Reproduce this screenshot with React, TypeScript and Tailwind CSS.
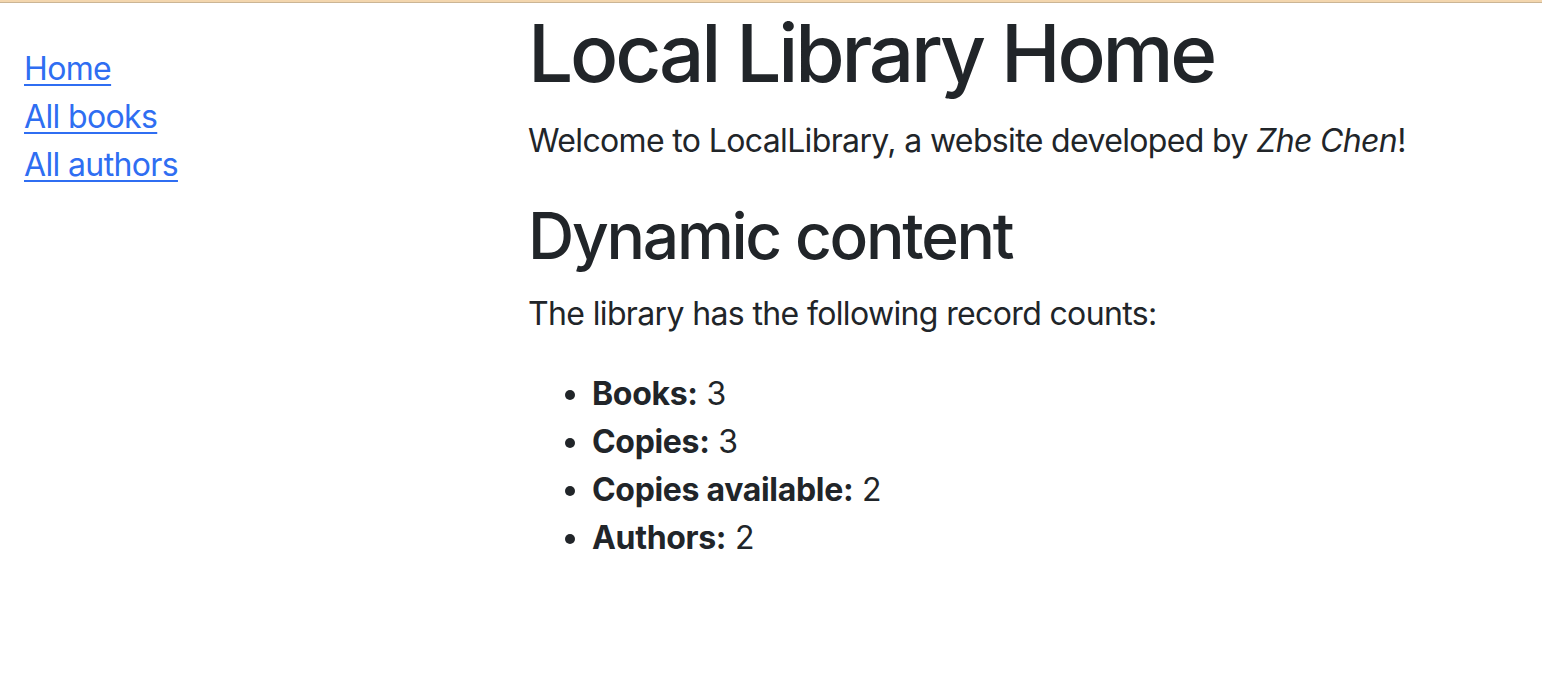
export default function App() {
  const counts = [
    { label: 'Books:', value: 3 },
    { label: 'Copies:', value: 3 },
    { label: 'Copies available:', value: 2 },
    { label: 'Authors:', value: 2 },
  ];

  return (
    <div className="min-h-screen w-full bg-white text-[#212529] font-['Inter','Liberation_Sans',sans-serif] text-[32px] leading-[48px] tracking-[-0.02em]">
      {/* top edge */}
      <div className="h-[2px] bg-[#f3d6ae]" />
      <div className="h-px bg-[#cbb595]" />

      <div className="flex px-6 pt-[2px]">
        {/* sidebar */}
        <div className="w-[504px] shrink-0">
          <ul className="mt-[40px]">
            <li><a href="#" className="text-[#2f6ef2] underline underline-offset-[4px] decoration-2">Home</a></li>
            <li><a href="#" className="text-[#2f6ef2] underline underline-offset-[4px] decoration-2">All books</a></li>
            <li><a href="#" className="text-[#2f6ef2] underline underline-offset-[4px] decoration-2">All authors</a></li>
          </ul>
        </div>

        {/* main content */}
        <div className="flex-1">
          <h1 className="text-[80px] leading-[96px] font-medium tracking-[-0.04em] mb-4">Local Library Home</h1>
          <p className="mb-8">
            Welcome to LocalLibrary, a website developed by <em>Zhe Chen</em>!
          </p>

          <h2 className="text-[64px] leading-[77px] font-medium tracking-[-0.035em] mb-4">Dynamic content</h2>
          <p className="mb-8">The library has the following record counts:</p>

          <ul className="list-disc pl-16 tracking-[-0.01em]">
            {counts.map((c) => (
              <li key={c.label}>
                <strong className="font-bold">{c.label}</strong> {c.value}
              </li>
            ))}
          </ul>
        </div>
      </div>
    </div>
  );
}
